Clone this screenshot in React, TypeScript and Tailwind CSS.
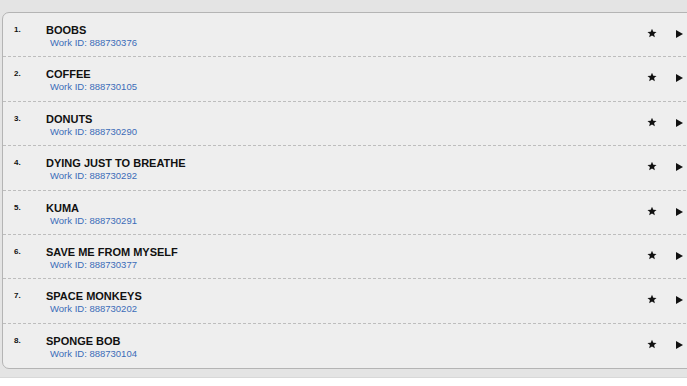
import React from "react";

const items = [
  ["BOOBS", "888730376"],
  ["COFFEE", "888730105"],
  ["DONUTS", "888730290"],
  ["DYING JUST TO BREATHE", "888730292"],
  ["KUMA", "888730291"],
  ["SAVE ME FROM MYSELF", "888730377"],
  ["SPACE MONKEYS", "888730202"],
  ["SPONGE BOB", "888730104"],
];

function Star() {
  return (
    <svg width="10" height="10" viewBox="0 0 24 24" className="block">
      <path d="M12 1.5l3.1 7.2 7.8.6-5.9 5.1 1.8 7.6L12 17.9 5.2 22l1.8-7.6L1.1 9.3l7.8-.6z" fill="#111" />
    </svg>
  );
}

function Arrow() {
  return (
    <svg width="7" height="8" viewBox="0 0 7 8" className="block">
      <path d="M0 0L7 4L0 8Z" fill="#111" />
    </svg>
  );
}

export default function App() {
  return (
    <div className="w-[687px] h-[386px] overflow-hidden bg-white" style={{ fontFamily: '"Liberation Sans", Arial, sans-serif' }}>
      <div className="h-[378px] bg-[#e4e4e4] pt-[12px] pl-[2px] border-b border-[#d8d8d8]">
        <div className="w-[700px] h-[357px] bg-[#eeeeee] border border-[#b4b4b4] rounded-l-[7px] flex flex-col overflow-hidden">
          {items.map(([title, id], i) => (
            <div
              key={title}
              className={`h-[44.4px] shrink-0 flex items-start ${i < items.length - 1 ? "border-b border-dashed border-[#bdbdbd]" : ""}`}
            >
              <div className="w-[43px] pl-[11px] pt-[13px] text-[8px] font-bold text-[#111] leading-none">{i + 1}.</div>
              <div className="flex-1 pt-[10px]">
                <div className="text-[11px] font-bold text-[#111] leading-[14px]">{title}</div>
                <div className="pl-[4px] text-[9.5px] text-[#3b6cb8] leading-[12px]">Work ID: {id}</div>
              </div>
              <div className="flex items-start pt-[15px] pr-[18px]">
                <Star />
                <div className="ml-[19px] mt-[2px]"><Arrow /></div>
              </div>
            </div>
          ))}
        </div>
      </div>
    </div>
  );
}
